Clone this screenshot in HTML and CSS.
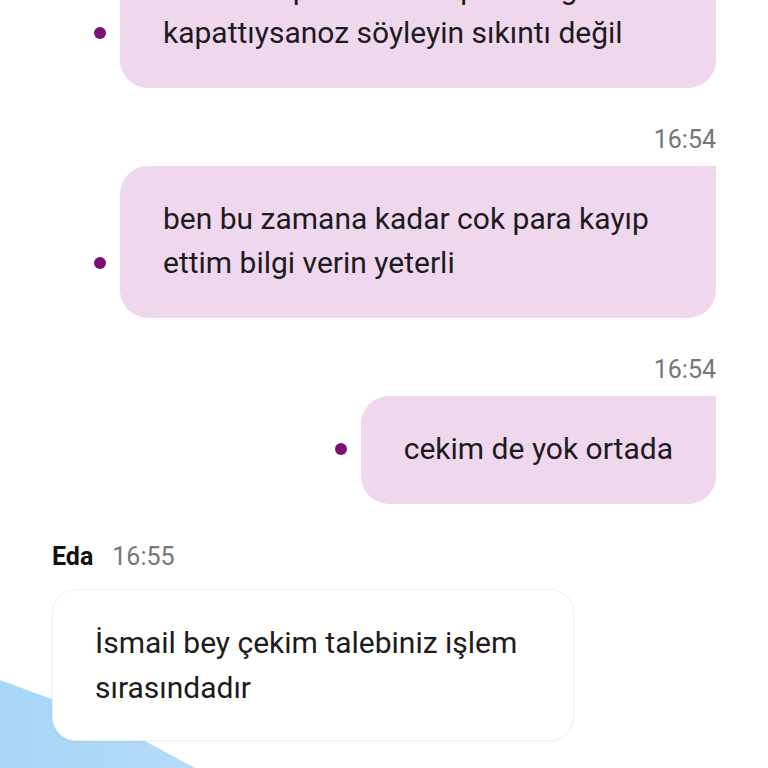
FILE: index.html
```html
<!DOCTYPE html>
<html lang="tr">
<head>
<meta charset="utf-8">
<title>Sohbet</title>
<link rel="stylesheet" href="styles.css">
</head>
<body>
<div class="blob"></div>
<main class="chat">
  <div class="row sent first">
    <span class="dot"></span>
    <div class="bubble out">hesabımı parası ile de paramı geri kapattıysanoz söyleyin sıkıntı değil</div>
  </div>
  <div class="time">16:54</div>
  <div class="row sent">
    <span class="dot"></span>
    <div class="bubble out">ben bu zamana kadar cok para kayıp ettim bilgi verin yeterli</div>
  </div>
  <div class="time">16:54</div>
  <div class="row sent">
    <span class="dot"></span>
    <div class="bubble out">cekim de yok ortada</div>
  </div>
  <div class="meta"><span class="name">Eda</span><span class="mtime">16:55</span></div>
  <div class="row recv">
    <div class="bubble in">İsmail bey çekim talebiniz işlem sırasındadır</div>
  </div>
</main>
</body>
</html>
```
FILE: styles.css
```css
html, body {
  margin: 0;
  padding: 0;
  background: #ffffff;
  height: 768px;
  overflow: hidden;
}
body {
  font-family: Roboto, "Noto Sans", "Liberation Sans", sans-serif;
  color: #1d1b20;
  position: relative;
}
.blob {
  position: absolute;
  left: 0;
  top: 0;
  width: 768px;
  height: 768px;
  background: linear-gradient(90deg, #a7d6f7 0%, #c4e4fa 60%, #e3f2fd 100%);
  clip-path: polygon(0 680px, 130px 728px, 143px 740px, 195px 768px, 0 768px);
  z-index: 0;
}
.chat {
  position: relative;
  z-index: 1;
  display: flex;
  flex-direction: column;
  padding: 0 52px;
}
.row {
  display: flex;
  align-items: flex-end;
}
.row.sent {
  justify-content: flex-end;
  gap: 14px;
}
.row.first {
  margin-top: -64px;
}
.dot {
  width: 12px;
  height: 12px;
  border-radius: 50%;
  background: #7b0f73;
  margin-bottom: 49px;
  flex: none;
}
.bubble {
  font-size: 30px;
  line-height: 44px;
  box-sizing: border-box;
}
.bubble.out {
  background: #efd8ee;
  max-width: 596px;
  padding: 31px 43px 33px 43px;
  border-radius: 28px 0 28px 28px;
}
.time {
  text-align: right;
  font-size: 25px;
  line-height: 30px;
  color: #767676;
  margin: 37px 0 11px;
}
.meta {
  display: flex;
  align-items: baseline;
  gap: 19px;
  margin: 38px 0 17px;
  line-height: 30px;
}
.name {
  font-size: 25px;
  font-weight: 700;
  color: #111;
}
.mtime {
  font-size: 25px;
  color: #767676;
}
.bubble.in {
  background: #ffffff;
  max-width: 522px;
  padding: 30px 42px 30px 42px;
  line-height: 45px;
  border: 1px solid #f0f0f0;
  border-radius: 24px;
  box-shadow: 0 1px 3px rgba(0, 0, 0, 0.04);
}
```
